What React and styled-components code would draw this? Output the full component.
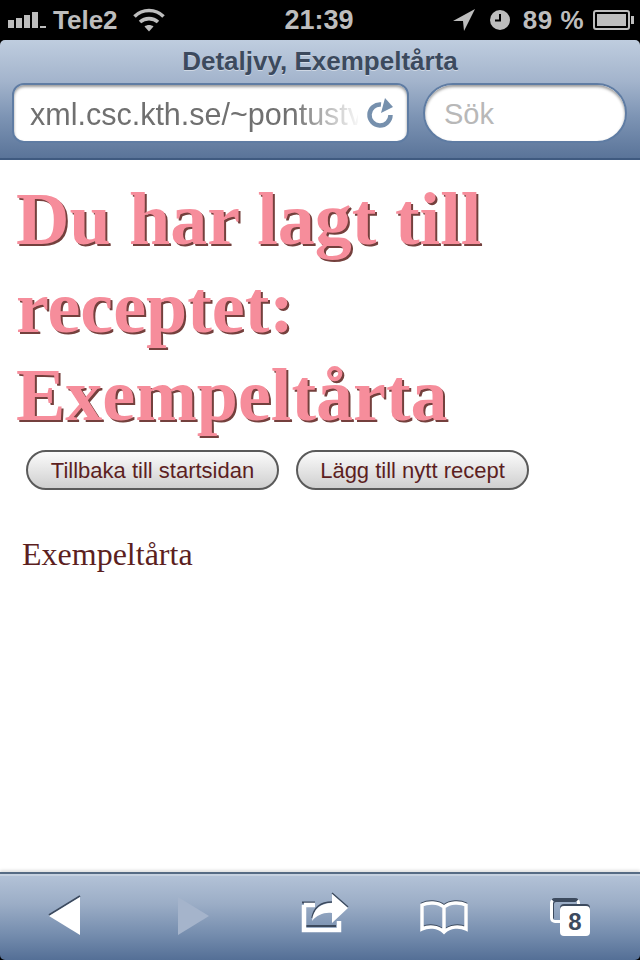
import React from 'react';
import styled, { createGlobalStyle } from 'styled-components';

const GlobalStyle = createGlobalStyle`
  html, body {
    margin: 0;
    padding: 0;
    background: #000;
  }
`;

const Screen = styled.div`
  width: 640px;
  height: 960px;
  overflow: hidden;
  display: flex;
  flex-direction: column;
  background: #000;
  font-family: 'Liberation Sans', Arial, sans-serif;
`;

const StatusBar = styled.div`
  height: 40px;
  flex-shrink: 0;
  display: flex;
  align-items: center;
  padding: 0 6px 0 8px;
  box-sizing: border-box;
  color: #bdbdbd;
  font-weight: 700;
  font-size: 26px;
`;

const StatusLeft = styled.div`
  width: 260px;
  display: flex;
  align-items: center;
`;

const Carrier = styled.span`
  margin: 0 15px 0 7px;
`;

const Clock = styled.span`
  width: 100px;
  text-align: center;
  font-size: 27px;
  margin-left: 1px;
`;

const StatusRight = styled.div`
  flex: 1;
  display: flex;
  align-items: center;
  justify-content: flex-end;
`;

const ClockIcon = styled.svg`
  margin-left: 14px;
`;

const Percent = styled.span`
  margin: 0 9px 0 13px;
  letter-spacing: 0.5px;
`;

const NavBar = styled.div`
  height: 120px;
  flex-shrink: 0;
  box-sizing: border-box;
  padding-top: 7px;
  border-radius: 5px 5px 0 0;
  border-bottom: 2px solid #3f5a80;
  background: linear-gradient(#bfcddf 0%, #a3b4cc 35%, #7d94b4 65%, #5a7499 100%);
`;

const NavTitle = styled.div`
  height: 28px;
  line-height: 28px;
  text-align: center;
  font-size: 26px;
  font-weight: 700;
  color: #3c4a5e;
  text-shadow: 0 1px 0 rgba(255, 255, 255, 0.45);
`;

const NavFields = styled.div`
  display: flex;
  gap: 14px;
  margin: 8px 13px 0 12px;
`;

const UrlField = styled.div`
  width: 397px;
  height: 60px;
  box-sizing: border-box;
  display: flex;
  align-items: center;
  padding: 0 13px 0 16px;
  gap: 8px;
  background: #fff;
  border: 2px solid #5f7ca3;
  border-radius: 12px;
  box-shadow: inset 0 2px 3px rgba(0, 0, 0, 0.4);
`;

const UrlText = styled.div`
  flex: 1;
  overflow: hidden;
  white-space: nowrap;
  padding-top: 3px;
  font-size: 30.5px;
  color: #707070;
  -webkit-mask-image: linear-gradient(to right, #000 80%, rgba(0, 0, 0, 0.05) 100%);
  mask-image: linear-gradient(to right, #000 80%, rgba(0, 0, 0, 0.05) 100%);
`;

const SearchField = styled.div`
  width: 204px;
  height: 60px;
  box-sizing: border-box;
  display: flex;
  align-items: center;
  padding: 3px 0 0 19px;
  background: #fff;
  border: 2px solid #5f7ca3;
  border-radius: 30px;
  box-shadow: inset 0 2px 3px rgba(0, 0, 0, 0.4);
  font-size: 29px;
  color: #b8b8b8;
`;

const Page = styled.main`
  flex: 1;
  background: #fff;
  padding: 15px 0 0 16px;
  box-sizing: border-box;
  color: #5c1f1f;
`;

const Heading = styled.h1`
  margin: 0;
  font-family: 'Liberation Serif', 'Times New Roman', serif;
  font-size: 74px;
  line-height: 88px;
  font-weight: 700;
  color: #f68d9b;
  text-shadow: 2px 2px 0 #74403d;
`;

const ButtonRow = styled.div`
  display: flex;
  gap: 17px;
  margin: 11px 0 0 10px;
`;

const PillButton = styled.div`
  height: 40px;
  box-sizing: border-box;
  display: flex;
  align-items: center;
  justify-content: center;
  padding-top: 2px;
  width: ${(p) => p.$width}px;
  border: 2px solid #5a5a5a;
  border-radius: 20px;
  background: linear-gradient(#fbfbfb, #cfcfcf);
  font-size: 22px;
  color: #5c1f1f;
`;

const Recipe = styled.p`
  margin: 47px 0 0 6px;
  font-family: 'Liberation Serif', 'Times New Roman', serif;
  font-size: 32px;
  line-height: 34px;
`;

const Toolbar = styled.div`
  height: 88px;
  flex-shrink: 0;
  box-sizing: border-box;
  display: flex;
  align-items: center;
  padding-left: 49px;
  border-top: 2px solid #566b84;
  border-radius: 0 0 5px 5px;
  background: linear-gradient(#b4c3d8 0%, #9badc6 35%, #758dae 70%, #546f96 100%);
  box-shadow: inset 0 2px 0 #c6d1e0, 0 -2px 3px rgba(0, 0, 0, 0.12);
`;

const ToolIcon = styled.svg`
  display: block;
  flex-shrink: 0;
  overflow: visible;
  margin-left: ${(p) => p.$offset || 0}px;
`;

const TabsIcon = styled.div`
  position: relative;
  width: 40px;
  height: 38px;
  margin-left: ${(p) => p.$offset}px;
`;

const TabsBack = styled.div`
  width: 30px;
  height: 25px;
  box-sizing: border-box;
  border: 3px solid #fff;
  border-top-color: #3c4a5e;
  border-radius: 5px;
  box-shadow: inset 1px 1px 0 #3c4a5e;
`;

const TabsBadge = styled.div`
  position: absolute;
  right: 0;
  bottom: 0;
  width: 30px;
  height: 30px;
  border-radius: 4px;
  background: #fff;
  box-shadow: 0 -2px 0 #3c4a5e;
  color: #3c4a5e;
  font-size: 24px;
  font-weight: 700;
  line-height: 32px;
  text-align: center;
`;

const bookPath =
  'M24 7C18 2 8 2 2 5V29C8 26 18 26 24 32C30 26 40 26 46 29V5C40 2 30 2 24 7ZM24 7V31';

const App = () => (
  <Screen>
    <GlobalStyle />
    <StatusBar>
      <StatusLeft>
        <svg width="38" height="16" viewBox="0 0 38 16">
          <rect x="0" y="8" width="6" height="8" fill="#bdbdbd" />
          <rect x="8" y="6" width="6" height="10" fill="#bdbdbd" />
          <rect x="16" y="3" width="6" height="13" fill="#bdbdbd" />
          <rect x="24" y="0" width="6" height="16" fill="#bdbdbd" />
          <rect x="32" y="14" width="6" height="2" fill="#bdbdbd" />
        </svg>
        <Carrier>Tele2</Carrier>
        <svg width="32" height="24" viewBox="0 0 32 24" fill="none" stroke="#bdbdbd" strokeWidth="3.6">
          <path d="M1.5 8.5C9.5 0.5 22.5 0.5 30.5 8.5" />
          <path d="M7 14C12 9.5 20 9.5 25 14" />
          <path d="M16 23.5L11.5 18.5C14 16.5 18 16.5 20.5 18.5Z" fill="#bdbdbd" stroke="none" />
        </svg>
      </StatusLeft>
      <Clock>21:39</Clock>
      <StatusRight>
        <svg width="24" height="24" viewBox="0 0 24 24">
          <path d="M1 13L23 1L12 23L11 13Z" fill="#bdbdbd" />
        </svg>
        <ClockIcon width="20" height="20" viewBox="0 0 20 20">
          <circle cx="10" cy="10" r="10" fill="#bdbdbd" />
          <path d="M10 4V10.5H5" fill="none" stroke="#000" strokeWidth="2" />
        </ClockIcon>
        <Percent>89 %</Percent>
        <svg width="41" height="20" viewBox="0 0 41 20">
          <rect x="1" y="1" width="35" height="18" rx="2" fill="none" stroke="#bdbdbd" strokeWidth="2" />
          <rect x="4" y="4" width="29" height="12" fill="#bdbdbd" />
          <rect x="38" y="6" width="3" height="8" fill="#bdbdbd" />
        </svg>
      </StatusRight>
    </StatusBar>

    <NavBar>
      <NavTitle>Detaljvy, Exempeltårta</NavTitle>
      <NavFields>
        <UrlField>
          <UrlText>xml.csc.kth.se/~pontustv</UrlText>
          <svg width="28" height="30" viewBox="0 0 28 30">
            <path d="M24.5 17A10.5 10.5 0 1 1 15 6.5" fill="none" stroke="#7690ad" strokeWidth="4.5" />
            <path d="M19 0L27 9L15 15Z" fill="#7690ad" />
          </svg>
        </UrlField>
        <SearchField>Sök</SearchField>
      </NavFields>
    </NavBar>

    <Page>
      <Heading>Du har lagt till receptet: Exempeltårta</Heading>
      <ButtonRow>
        <PillButton $width={253}>Tillbaka till startsidan</PillButton>
        <PillButton $width={233}>Lägg till nytt recept</PillButton>
      </ButtonRow>
      <Recipe>Exempeltårta</Recipe>
    </Page>

    <Toolbar>
      <ToolIcon width="31" height="40" viewBox="0 0 31 40">
        <path d="M31 -1L0 18" stroke="#3c4a5e" strokeWidth="2" fill="none" />
        <path d="M31 0V38L0 19Z" fill="#fff" />
      </ToolIcon>
      <ToolIcon $offset={98} width="31" height="40" viewBox="0 0 31 40">
        <path d="M0 0V38L31 19Z" fill="#a5b4cb" />
      </ToolIcon>
      <ToolIcon $offset={92} width="48" height="48" viewBox="0 0 48 48">
        <path d="M1 9.5H14M3 33H35" fill="none" stroke="#3c4a5e" strokeWidth="2" />
        <path d="M3 12H14M3 12V37H38V28" fill="none" stroke="#fff" strokeWidth="4.5" />
        <path d="M31 0L47 14M11 25C13 14 20 9 31 9" fill="none" stroke="#3c4a5e" strokeWidth="1.5" />
        <path d="M11 28C12 16 20 10 31 10V1L47 15L31 30V20C23 19 16 22 11 28Z" fill="#fff" />
      </ToolIcon>
      <ToolIcon $offset={71} width="48" height="34" viewBox="0 0 48 34">
        <path d={bookPath} transform="translate(0 -1.5)" fill="none" stroke="#3c4a5e" strokeWidth="2.5" />
        <path d={bookPath} fill="none" stroke="#fff" strokeWidth="3.5" />
      </ToolIcon>
      <TabsIcon $offset={82}>
        <TabsBack />
        <TabsBadge>8</TabsBadge>
      </TabsIcon>
    </Toolbar>
  </Screen>
);

export default App;
